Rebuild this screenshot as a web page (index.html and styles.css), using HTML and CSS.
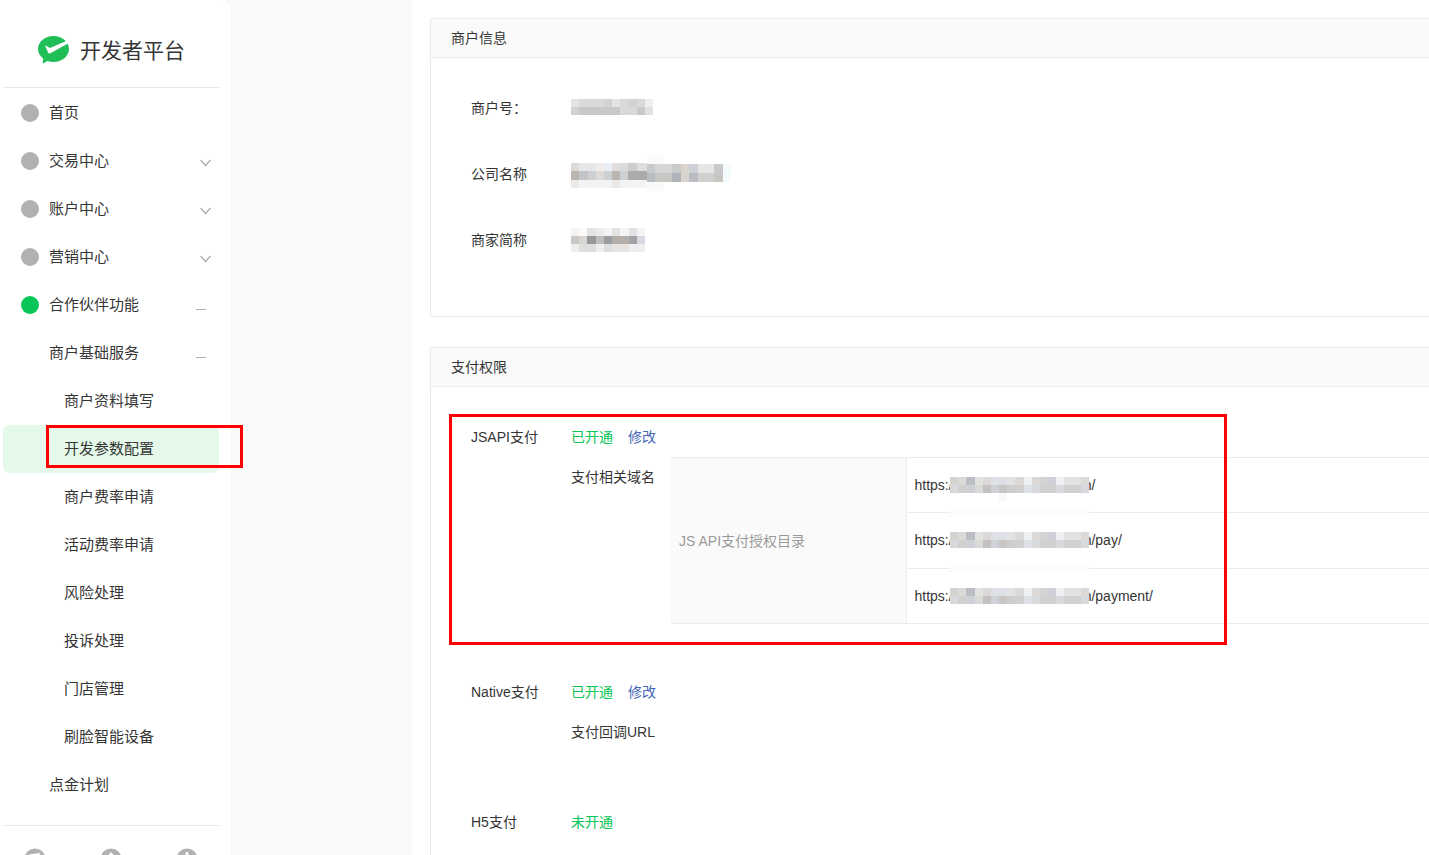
FILE: index.html
```html
<!DOCTYPE html>
<html lang="zh-CN">
<head>
<meta charset="utf-8">
<title>开发者平台</title>
<link rel="stylesheet" href="styles.css">
</head>
<body>
<svg class="defs" aria-hidden="true">
  <symbol id="chevron" viewBox="0 0 16 16"><path d="M4.5 7l5 5.5 5-5.5" fill="none" stroke="#aaa" stroke-width="1.2"/></symbol>
  <symbol id="minus" viewBox="0 0 16 16"><path d="M0 12.5h10" fill="none" stroke="#b2b2b2"/></symbol>
  <symbol id="mask-url" viewBox="0 0 17 2" preserveAspectRatio="none">
    <path stroke="#d4d3d2" d="M0 .5h1M11 .5h1M3 1.5h1M9 1.5h1M15 1.5h1"/>
    <path stroke="#dcd8d5" d="M1 .5h1M10 .5h1M4 .5h1M8 .5h1M16 .5h1"/>
    <path stroke="#bbbec4" d="M2 .5h1"/>
    <path stroke="#e2e3e1" d="M3 .5h1M7 .5h1M13 .5h3"/>
    <path stroke="#dde1e5" d="M5 .5h2M9 1.5h1"/>
    <path stroke="#eef0f2" d="M9 .5h1M13 .5h1"/>
    <path stroke="#d0d1d6" d="M12 .5h1M5 1.5h1M2 1.5h1"/>
    <path stroke="#d8d9dc" d="M0 1.5h1M10 1.5h1M13 1.5h1M16 1.5h1"/>
    <path stroke="#d0d0d0" d="M1 1.5h1M8 1.5h1M11 1.5h2M14 1.5h2"/>
    <path stroke="#d8dad7" d="M3 1.5h1"/>
    <path stroke="#c4c0c0" d="M4 1.5h1"/>
    <path stroke="#c7c6c5" d="M6 1.5h1"/>
    <path stroke="#cdcecd" d="M7 1.5h1"/>
  </symbol>
</svg>

<div class="app">
  <aside class="sidebar">
    <header class="brand">
      <svg class="logo" viewBox="0 0 32 28" aria-hidden="true">
        <path d="M15.5 0C24 0 31 5.800 31 13S24 26 15.500 26c-2.200 0-4.200-.4-6-1L5.500 27.300c-.5.300-.9 0-.8-.5l.5-4.300C2 20.200 0 16.900 0 13 0 5.800 7 0 15.500 0z" fill="#1fbe57"/>
        <path d="M7 9.600c.9-.3 3.100 1.600 5 2.500L28.300 4.900 30.400 7.300 12.400 17.200c-1 .5-1.900.3-2.300-.6z" fill="#fff"/>
      </svg>
      <span>开发者平台</span>
    </header>
    <nav class="menu">
      <a class="item" href="#"><i class="dot"></i>首页</a>
      <a class="item" href="#"><i class="dot"></i>交易中心<svg class="toggle"><use href="#chevron"/></svg></a>
      <a class="item" href="#"><i class="dot"></i>账户中心<svg class="toggle"><use href="#chevron"/></svg></a>
      <a class="item" href="#"><i class="dot"></i>营销中心<svg class="toggle"><use href="#chevron"/></svg></a>
      <a class="item" href="#"><i class="dot dot-on"></i>合作伙伴功能<svg class="toggle"><use href="#minus"/></svg></a>
      <a class="item level2" href="#">商户基础服务<svg class="toggle"><use href="#minus"/></svg></a>
      <a class="item level3" href="#">商户资料填写</a>
      <a class="item level3 active" href="#">开发参数配置<span class="marker marker-menu"></span></a>
      <a class="item level3" href="#">商户费率申请</a>
      <a class="item level3" href="#">活动费率申请</a>
      <a class="item level3" href="#">风险处理</a>
      <a class="item level3" href="#">投诉处理</a>
      <a class="item level3" href="#">门店管理</a>
      <a class="item level3" href="#">刷脸智能设备</a>
      <a class="item level2" href="#">点金计划</a>
    </nav>
    <footer class="shortcuts">
      <a href="#" aria-label="消息"><svg viewBox="0 0 22 22"><circle cx="11" cy="11" r="10.500" fill="#b2b2b2"/><path d="M5 6.500l11-1.500-3 11-3-4z" fill="#fff"/></svg></a>
      <a href="#" aria-label="账号"><svg viewBox="0 0 22 22"><circle cx="11" cy="11" r="10.500" fill="#b2b2b2"/><path d="M11 4l5 6-5 7-5-7z" fill="#fff"/></svg></a>
      <a href="#" aria-label="退出"><svg viewBox="0 0 22 22"><circle cx="11" cy="11" r="10.500" fill="#b2b2b2"/><path d="M10 4h2l1 4h3l-5 8-5-8h3z" fill="#fff"/></svg></a>
    </footer>
  </aside>

  <main class="content">
    <section class="panel">
      <h2>商户信息</h2>
      <dl class="info">
        <dt>商户号：</dt>
        <dd><svg class="mask mask-id" viewBox="0 0 10 2" preserveAspectRatio="none">
          <path stroke="#e4e4e2" d="M0 .5h1M5 .5h1"/><path stroke="#d9d9d9" d="M1 .5h3M6 .5h1M8 .5h1M6 1.500h2"/><path stroke="#d2d2d2" d="M4 .5h1M7 .5h1M0 1.500h1"/><path stroke="#eeeef0" d="M9 .5h1"/><path stroke="#c8c8c8" d="M1 1.500h2M4 1.500h2M8 1.500h1"/><path stroke="#c6cace" d="M3 1.500h1"/><path stroke="#e1e1e4" d="M9 1.500h1"/>
        </svg></dd>
        <dt>公司名称</dt>
        <dd><svg class="mask mask-name" viewBox="0 0 160 36">
          <path stroke-width="8" stroke="#dbdbd9" d="M0 12h8M49 12h16"/><path stroke-width="8" stroke="#e6e7e8" d="M8 12h17"/><path stroke-width="8" stroke="#efedec" d="M25 12h8"/><path stroke-width="8" stroke="#e9edf5" d="M33 12h8"/><path stroke-width="8" stroke="#dfdedc" d="M41 12h8M66 12h10"/><path stroke-width="8" stroke="#cdced1" d="M57 12h9"/>
          <path stroke-width="9" stroke="#bbb5af" d="M0 20.500h8M41 20.500h8"/><path stroke-width="9" stroke="#c3c4c7" d="M8 20.500h9"/><path stroke-width="9" stroke="#ced0d3" d="M17 20.500h8M33 20.500h8M49 20.500h8"/><path stroke-width="9" stroke="#dedad7" d="M25 20.500h8"/><path stroke-width="9" stroke="#acabaa" d="M57 20.500h19"/>
          <path stroke-width="8" stroke="#f3f3f3" d="M0 29h76"/><path stroke-width="8" stroke="#ebe9e7" d="M0 29h8M41 29h8"/>
          <path stroke-width="9" stroke="#fafafa" d="M76 4.500h17M76 31.500h17"/>
          <path stroke-width="9" stroke="#c9cacb" d="M76 13.500h8M101 13.500h9M143 13.500h9"/><path stroke-width="9" stroke="#d6d6d6" d="M84 13.500h17"/><path stroke-width="18" stroke="#d9d4ce" d="M110 18h8"/><path stroke-width="9" stroke="#cdd0d7" d="M118 13.500h9"/><path stroke-width="9" stroke="#e6e6e4" d="M127 13.500h16"/>
          <path stroke-width="9" stroke="#b9bcc3" d="M76 22.500h8M118 22.500h9"/><path stroke-width="9" stroke="#c8c6c3" d="M84 22.500h17M143 22.500h9"/><path stroke-width="9" stroke="#afb2b8" d="M101 22.500h9"/><path stroke-width="9" stroke="#d1cfce" d="M127 22.500h16"/><path stroke-width="18" stroke="#f5fbfc" d="M152 18h8"/>
        </svg></dd>
        <dt>商家简称</dt>
        <dd><svg class="mask mask-short" viewBox="0 0 9 3" preserveAspectRatio="none">
          <path stroke="#f4f4f4" d="M0 .5h9"/><path stroke="#fcfbfa" d="M1 .5h1"/><path stroke="#e3e3e3" d="M2 .5h1M5 .5h1M7 .5h1"/><path stroke="#ebebed" d="M3 .5h1"/>
          <path stroke="#cdc8c4" d="M0 1.500h1"/><path stroke="#d7d6d3" d="M1 1.500h1"/><path stroke="#97989a" d="M2 1.500h1"/><path stroke="#b9bdbc" d="M3 1.500h1M6 1.500h1"/><path stroke="#9b9ca1" d="M4 1.500h1"/><path stroke="#b3aeaa" d="M5 1.500h2"/><path stroke="#a2a3a5" d="M7 1.500h1"/><path stroke="#d6d9e0" d="M8 1.500h1"/>
          <path stroke="#eeeeef" d="M0 2.500h9"/><path stroke="#dedede" d="M1 2.500h2M4 2.500h1"/><path stroke="#e6e3e1" d="M5 2.500h2"/>
        </svg></dd>
      </dl>
    </section>

    <section class="panel">
      <h2>支付权限</h2>
      <div class="rights">
        <div class="right">
          <span class="name">JSAPI支付</span>
          <div class="detail">
            <p class="status"><span class="on">已开通</span><a href="#">修改</a></p>
            <div class="domains">
              <span class="caption">支付相关域名</span>
              <table>
                <tr><th rowspan="3" scope="rowgroup">JS API支付授权目录</th><td>https:/<svg class="mask mask-url"><use href="#mask-url" width="139" height="16"/><path d="M49 20h8" stroke="#f8f8f8" stroke-width="8"/><path d="M0 36h139" stroke="#fcfcfc" stroke-width="8"/></svg>n/</td></tr>
                <tr><td>https:/<svg class="mask mask-url"><use href="#mask-url" width="139" height="16"/><path d="M0 36h139" stroke="#fcfcfc" stroke-width="8"/></svg>n/pay/</td></tr>
                <tr><td>https:/<svg class="mask mask-url"><use href="#mask-url" width="139" height="16"/></svg>n/payment/</td></tr>
              </table>
            </div>
          </div>
        </div>
        <div class="right">
          <span class="name">Native支付</span>
          <div class="detail">
            <p class="status"><span class="on">已开通</span><a href="#">修改</a></p>
            <p class="callback">支付回调URL</p>
          </div>
        </div>
        <div class="right">
          <span class="name">H5支付</span>
          <div class="detail"><p class="status"><span class="on">未开通</span></p></div>
        </div>
        <span class="marker marker-jsapi"></span>
      </div>
    </section>
  </main>
</div>
</body>
</html>
```
FILE: styles.css
```css
* { box-sizing: border-box; }

body {
  margin: 0;
  background: #fafafa;
  color: #353535;
  font: 14px/20px "Liberation Sans", "Noto Sans CJK SC", sans-serif;
}

a { color: inherit; text-decoration: none; }
.defs { position: absolute; width: 0; height: 0; }

.app {
  display: flex;
  gap: 181px;
  height: 100vh;
  overflow: hidden;
}

/* Sidebar */
.sidebar {
  flex: 0 0 231px;
  padding: 0 12px 0 3px;
  background: #fff;
  border-radius: 0 8px 0 0;
  box-shadow: 0 0 2px rgba(0, 0, 0, 0.08);
  height: max-content;
}
.brand {
  display: flex;
  align-items: center;
  gap: 10px;
  height: 88px;
  padding: 14px 0 0 35px;
  border-bottom: 1px solid #e7e7e7;
  font-size: 21px;
  line-height: 32px;
}
.logo { width: 32px; height: 28px; margin-bottom: 2px; }
.menu { padding: 1px 0 16px; }
.item {
  display: flex;
  align-items: center;
  height: 48px;
  padding: 0 7px 0 18px;
  border-radius: 6px;
  font-size: 15px;
}
.level2 { padding-left: 46px; }
.level3 { padding-left: 61px; }
.active { position: relative; background: #e4f9e9; }
.dot {
  width: 18px;
  height: 18px;
  margin-right: 10px;
  border-radius: 50%;
  background: #b0b1b3;
}
.dot-on { background: #07c556; }
.toggle { width: 16px; height: 16px; margin-left: auto; }
.shortcuts {
  display: flex;
  gap: 54px;
  padding: 22px 21px;
  border-top: 1px solid #e7e7e7;
}
.shortcuts svg { display: block; width: 22px; height: 22px; }

/* Content */
.content {
  flex: 1;
  min-width: 0;
  height: max-content;
  padding: 18px 0 30px 18px;
  background: #fff;
}
.panel {
  margin-bottom: 30px;
  border: 1px solid #ebebeb;
  border-right: 0;
}
.panel h2 {
  margin: 0;
  padding: 9px 20px;
  border-bottom: 1px solid #ebebeb;
  background: #fafafa;
  font-size: 14px;
  font-weight: 400;
}
.info {
  display: grid;
  grid-template-columns: 100px 1fr;
  grid-auto-rows: 66px;
  align-items: center;
  margin: 0;
  padding: 17px 0 43px 40px;
}
.info dd { display: flex; margin: 0; }
.mask { shape-rendering: crispEdges; }
.mask-id { width: 82px; height: 16px; margin-bottom: 2px; }
.mask-name { width: 160px; height: 36px; margin-bottom: 2px; }
.mask-short { width: 74px; height: 24px; }

.rights {
  position: relative;
  display: grid;
  gap: 58px;
  padding: 40px 0 60px 40px;
}
.right { display: flex; }
.name { flex: 0 0 100px; }
.detail { flex: 1; }
.status, .callback { margin: 0; }
.callback { padding: 20px 0 12px; }
.on { margin-right: 15px; color: #07c556; }
.detail a { color: #4467b5; }
.domains { display: flex; }
.caption { flex: 0 0 100px; padding-top: 20px; }

table {
  flex: 1;
  height: 167px;
  margin-top: 10px;
  border-collapse: collapse;
}
th, td {
  height: 55px;
  padding: 0 8px;
  border: 1px solid #ebebeb;
  border-right: 0;
  text-align: left;
  font-weight: 400;
  white-space: nowrap;
}
th {
  width: 235px;
  border-left: 0;
  background: #fafafa;
  color: #9a9a9a;
}
.mask-url {
  position: relative;
  width: 139px;
  height: 40px;
  margin: 2px -5px -30px -3px;
  vertical-align: top;
}

/* Highlight frames */
.marker {
  position: absolute;
  border: 3px solid #f00;
  pointer-events: none;
}
.marker-menu { top: 0; left: 43px; width: 197px; height: 43px; }
.marker-jsapi { top: 27px; left: 18px; width: 778px; height: 231px; }
```
